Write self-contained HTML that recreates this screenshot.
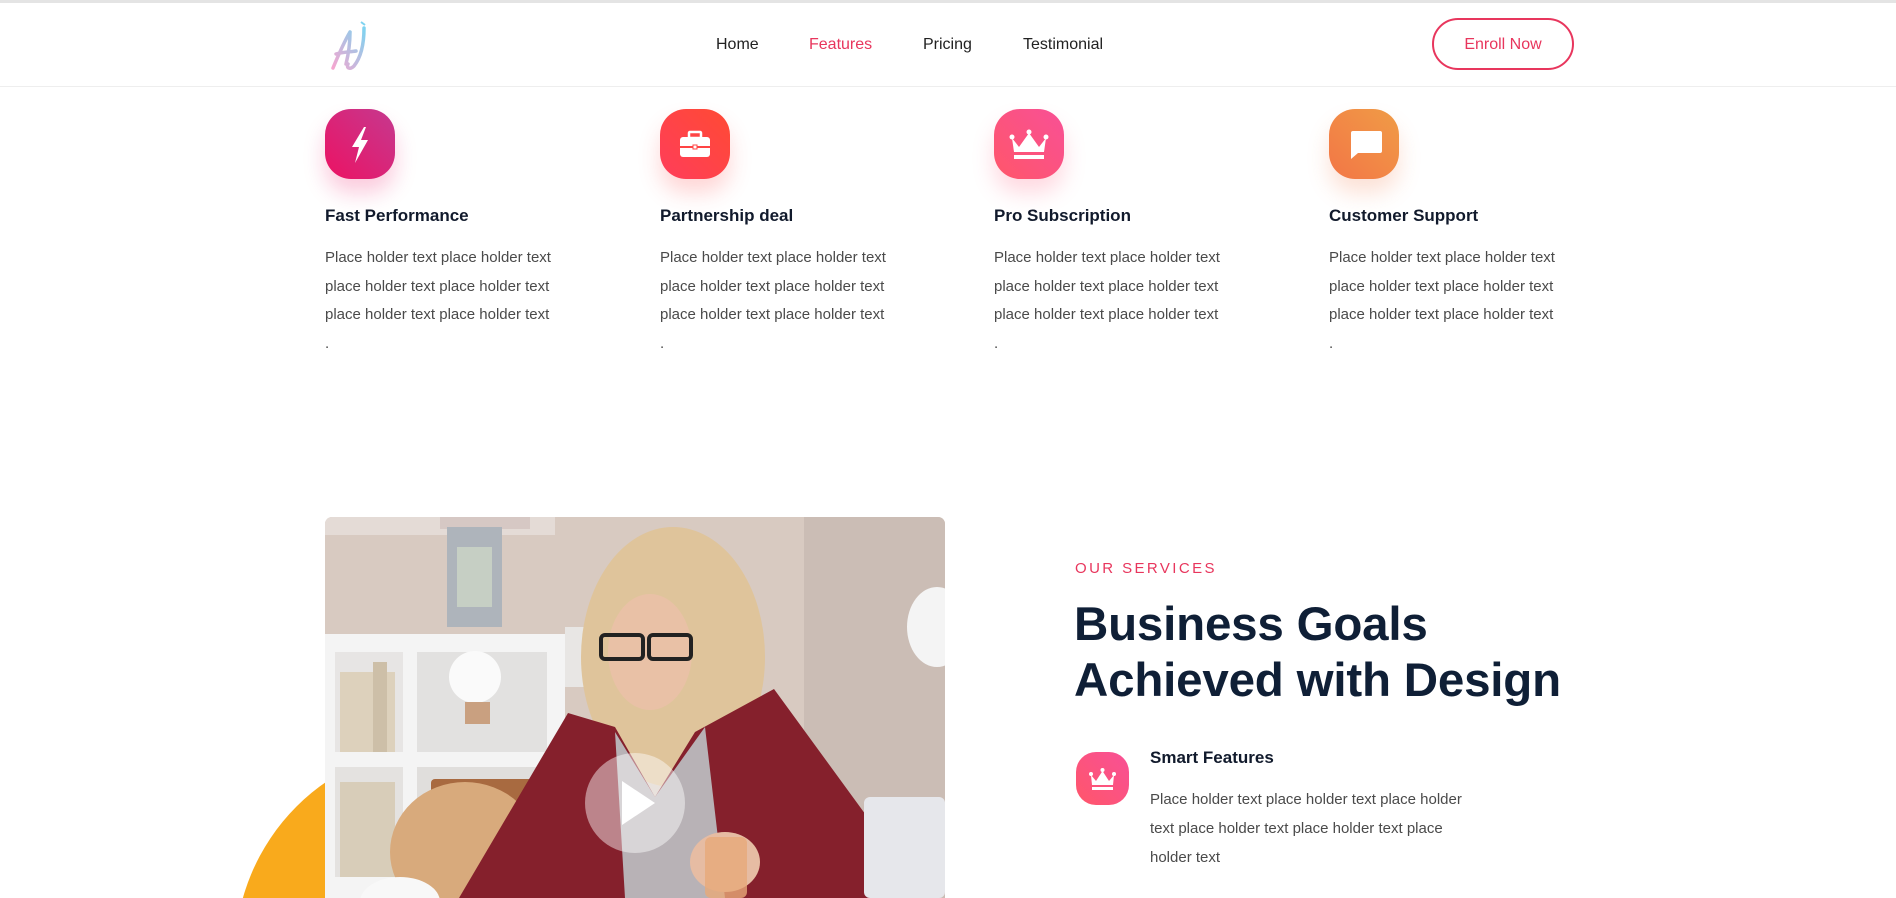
<!DOCTYPE html>
<html><head><meta charset="utf-8"><style>
*{margin:0;padding:0;box-sizing:border-box}
html,body{width:1896px;height:898px;overflow:hidden}
body{background:#fff;font-family:"Liberation Sans",sans-serif;position:relative}
#w{position:relative;width:1896px;height:898px;overflow:hidden}
.topline{position:absolute;top:0;left:0;width:100%;height:3px;background:#e4e4e4}
.nav{position:absolute;top:3px;left:0;width:100%;height:84px;border-bottom:1px solid #eee}
.nav a{position:absolute;top:33px;font-size:16px;color:#222;text-decoration:none}
.btn{position:absolute;left:1432px;width:142px;height:52px;border:2px solid #e8365d;border-radius:26px;color:#e8365d;font-size:16px;text-align:center;line-height:50px}
.feat{position:absolute;top:109px;width:320px}
.ic{width:70px;height:70px;border-radius:26px;position:relative}
.ic svg{position:absolute;left:0;top:0}
.feat h3{margin-top:27px;font-size:17px;color:#111a2c;font-weight:700}
.feat p{margin-top:18px;font-size:15px;line-height:28.5px;color:#4a4a4a}
.photo{position:absolute;left:325px;top:517px;width:620px;height:381px;border-radius:7px 7px 0 0;overflow:hidden}
</style></head><body><div id="w">
<div class="topline"></div>
<div class="nav">
<svg style="position:absolute;left:328px;top:17px" width="44" height="54" viewBox="0 0 44 54"><defs><linearGradient id="lg" x1="0" y1="1" x2="1" y2="0"><stop offset="0" stop-color="#f6a6d0"/><stop offset="1" stop-color="#7fd3f0"/></linearGradient></defs><path d="M5 48 C10 36 16 22 22 12 M22 12 C22 26 20 36 18 44 M8 34 C14 32 22 32 28 31 M36 8 C36 22 34 36 26 46 C22 50 18 48 20 44" stroke="url(#lg)" stroke-width="3.5" fill="none" stroke-linecap="round"/><path d="M33 2 l4 3" stroke="#7fd3f0" stroke-width="2"/></svg>
<a style="left:716px">Home</a>
<a style="left:809px;color:#e8365d">Features</a>
<a style="left:923px">Pricing</a>
<a style="left:1023px">Testimonial</a>
<div class="btn" style="top:15px">Enroll Now</div>
</div>

<div class="feat" style="left:325px"><div class="ic" style="background:linear-gradient(45deg,#ec1263,#c5398f);box-shadow:0 14px 22px rgba(236,18,99,.22)"><svg width="70" height="70"><path d="M39 18 L27 38 L34 38 L30 54 L43 31 L36 31 L41 18Z" fill="#fff"/></svg></div><h3>Fast Performance</h3><p>Place holder text place holder text<br>place holder text place holder text<br>place holder text place holder text<br>.</p></div>
<div class="feat" style="left:660px"><div class="ic" style="background:linear-gradient(45deg,#ff3d5a,#ff4a34);box-shadow:0 14px 22px rgba(255,70,70,.22)"><svg width="70" height="70"><rect x="29" y="23" width="12" height="6" rx="1" fill="none" stroke="#fff" stroke-width="2.5"/><rect x="20" y="28" width="30" height="20" rx="3" fill="#fff"/><rect x="20" y="37" width="30" height="2" fill="#ff4444"/><rect x="33" y="36" width="4" height="4" fill="#fff" stroke="#ff4444" stroke-width="1"/></svg></div><h3>Partnership deal</h3><p>Place holder text place holder text<br>place holder text place holder text<br>place holder text place holder text<br>.</p></div>
<div class="feat" style="left:994px"><div class="ic" style="background:linear-gradient(45deg,#ff566a,#f85096);box-shadow:0 14px 22px rgba(255,80,120,.22)"><svg width="70" height="70"><path d="M18 29 L25 38 L35 24 L45 38 L52 29 L50 43 L20 43Z" fill="#fff"/><circle cx="18" cy="28" r="2.5" fill="#fff"/><circle cx="35" cy="23" r="2.5" fill="#fff"/><circle cx="52" cy="28" r="2.5" fill="#fff"/><rect x="20" y="46" width="30" height="4" fill="#fff"/></svg></div><h3>Pro Subscription</h3><p>Place holder text place holder text<br>place holder text place holder text<br>place holder text place holder text<br>.</p></div>
<div class="feat" style="left:1329px"><div class="ic" style="background:linear-gradient(45deg,#f37646,#f09c46);box-shadow:0 14px 22px rgba(243,120,70,.22)"><svg width="70" height="70"><path d="M24 22 H51 a2 2 0 0 1 2 2 V42 a2 2 0 0 1 -2 2 H29 L22 50 V24 a2 2 0 0 1 2-2Z" fill="#fff"/></svg></div><h3>Customer Support</h3><p>Place holder text place holder text<br>place holder text place holder text<br>place holder text place holder text<br>.</p></div>

<div style="position:absolute;left:235px;top:745px;width:420px;height:153px;background:#f9aa1c;clip-path:circle(210px at 210px 210px)"></div>
<div class="photo">
<svg width="620" height="381" viewBox="0 0 620 381">
<rect width="620" height="381" fill="#d8cac1"/>
<rect x="479" width="141" height="381" fill="#cbbdb5"/>
<rect x="0" y="0" width="230" height="18" fill="#e4dbd6"/>
<rect x="115" y="0" width="90" height="12" fill="#d6c8c4"/>
<rect x="122" y="10" width="55" height="100" fill="#aeb4bb"/>
<rect x="132" y="30" width="35" height="60" fill="#c6cfc4"/>
<rect x="0" y="117" width="240" height="264" fill="#f4f4f4"/>
<rect x="10" y="135" width="68" height="100" fill="#e7e5e4"/>
<rect x="92" y="135" width="130" height="100" fill="#e2e1e0"/>
<rect x="10" y="250" width="68" height="110" fill="#e4e2e0"/>
<rect x="92" y="250" width="130" height="110" fill="#e0dedc"/>
<rect x="15" y="155" width="55" height="80" fill="#ddd1bc"/>
<rect x="48" y="145" width="14" height="90" fill="#cdbfa8"/>
<rect x="15" y="265" width="55" height="95" fill="#d8cdb9"/>
<circle cx="150" cy="160" r="26" fill="#fafafa"/>
<rect x="140" y="185" width="25" height="22" fill="#c9a080"/>
<rect x="106" y="262" width="120" height="28" rx="4" fill="#a86a40"/>
<ellipse cx="140" cy="335" rx="75" ry="70" fill="#d8aa7c"/>
<rect x="240" y="110" width="80" height="60" fill="#e8e6e4"/>
<ellipse cx="348" cy="140" rx="92" ry="130" fill="#dfc49b"/>
<ellipse cx="325" cy="135" rx="42" ry="58" fill="#e9c1a6"/>
<rect x="276" y="118" width="42" height="24" rx="4" fill="none" stroke="#222" stroke-width="4"/>
<rect x="324" y="118" width="42" height="24" rx="4" fill="none" stroke="#222" stroke-width="4"/>
<path d="M134 381 L243 196 L290 210 L330 280 L370 215 L449 172 L546 305 L546 381Z" fill="#85202c"/>
<path d="M290 215 L330 280 L380 210 L400 381 L300 381Z" fill="#b8b2b6"/>
<ellipse cx="400" cy="345" rx="35" ry="30" fill="#e6bca3"/>
<rect x="380" y="320" width="42" height="61" rx="6" fill="#e7a979" opacity=".8"/>
<rect x="539" y="280" width="81" height="101" rx="6" fill="#e6e7eb"/>
<ellipse cx="612" cy="110" rx="30" ry="40" fill="#f4f4f4"/>
<ellipse cx="75" cy="385" rx="40" ry="25" fill="#f8f8f8"/>
<circle cx="310" cy="286" r="50" fill="#fff" opacity=".45"/>
<path d="M297 264 L330 286 L297 308Z" fill="#fff"/>
</svg>
</div>

<div style="position:absolute;left:1075px;top:560px;font-size:15px;letter-spacing:2.4px;color:#e8365d">OUR SERVICES</div>
<div style="position:absolute;left:1074px;top:597px;font-size:47.5px;line-height:56px;font-weight:700;color:#0f1f36;letter-spacing:-0.2px">Business Goals<br>Achieved with Design</div>
<div style="position:absolute;left:1076px;top:752px;width:53px;height:53px;border-radius:20px;background:linear-gradient(45deg,#ff566a,#f85096)"><svg width="53" height="53"><path d="M15 23 L20 29 L26.5 19 L33 29 L38 23 L37 33 L16 33Z" fill="#fff"/><circle cx="15" cy="22" r="2" fill="#fff"/><circle cx="26.5" cy="18" r="2" fill="#fff"/><circle cx="38" cy="22" r="2" fill="#fff"/><rect x="16" y="35" width="21" height="3" fill="#fff"/></svg></div>
<div style="position:absolute;left:1150px;top:748px;font-size:17px;font-weight:700;color:#111a2c">Smart Features</div>
<div style="position:absolute;left:1150px;top:785px;font-size:15px;line-height:29px;color:#4a4a4a">Place holder text place holder text place holder<br>text place holder text place holder text place<br>holder text</div>
</div></body></html>
